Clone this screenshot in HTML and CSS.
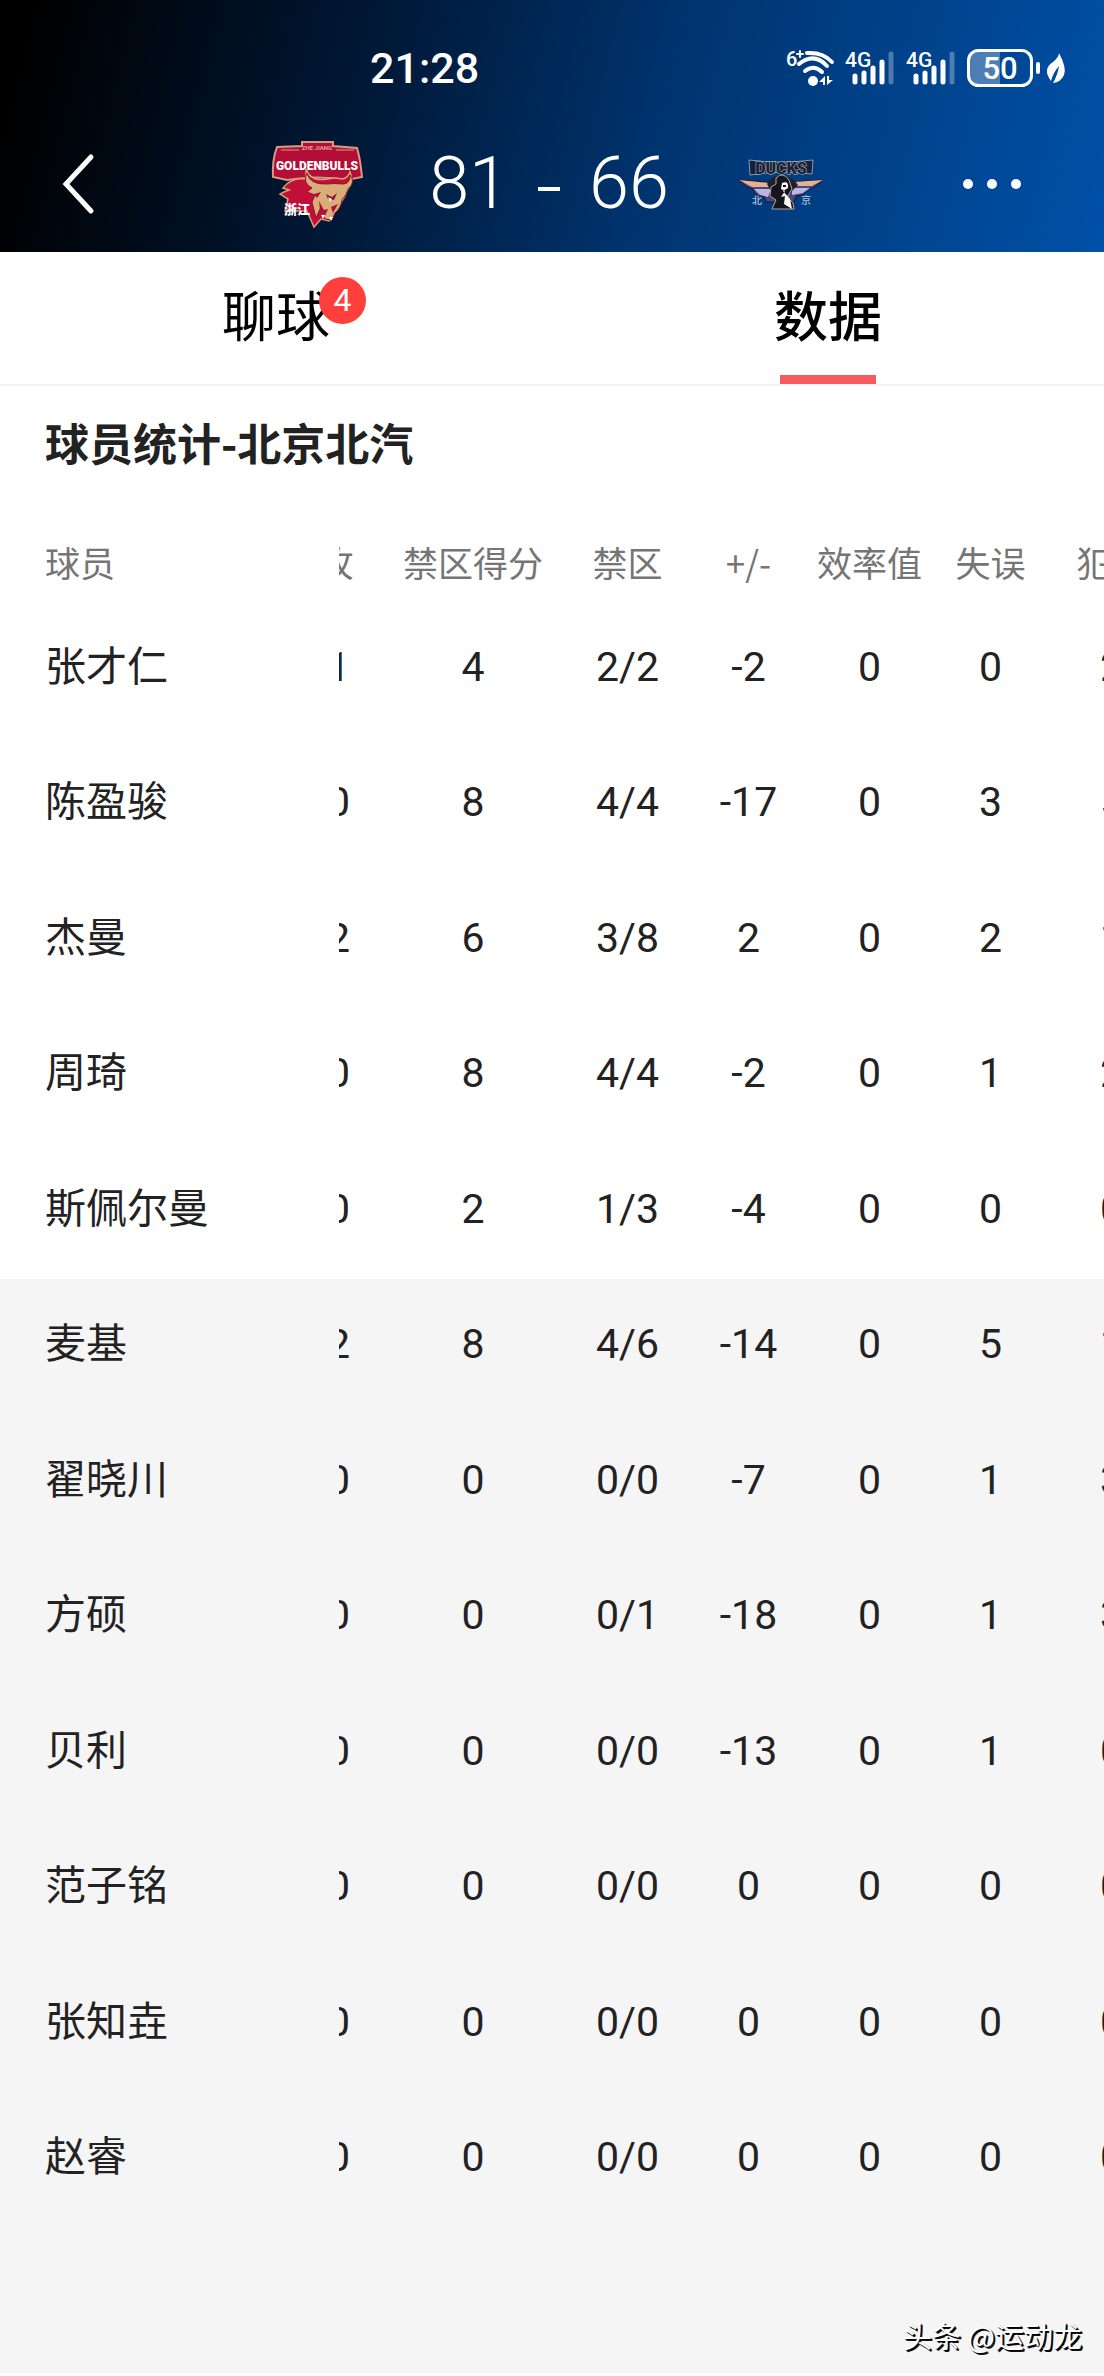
FILE: index.html
```html
<!DOCTYPE html>
<html lang="zh-CN">
<head>
<meta charset="utf-8">
<meta name="viewport" content="width=device-width, initial-scale=1">
<title>球员统计</title>
<link rel="stylesheet" href="styles.css">
</head>
<body>
<header class="top">
  <div class="status">
    <time class="clock">21:28</time>
    <div class="indicators">
      <svg class="wifi" viewBox="0 0 50 38" aria-hidden="true">
        <text class="tag" x="0" y="17" font-size="20">6</text>
        <path class="line" stroke-width="2" d="M14 2v6M11 5h6"/>
        <path class="line" stroke-width="4" d="M21 4q16-1 25 9M13 15q15-12 28 2M19 22q9-7 17 1"/>
        <circle cx="27" cy="32" r="5"/>
        <path d="M33 33l6-6v9h-2v-3zM41 27v9l6-5h-4v-4z"/>
      </svg>
      <svg class="signal" viewBox="0 0 52 38" aria-hidden="true">
        <text class="tag" x="0" y="18" font-size="21">4G</text>
        <path class="line" stroke-width="5" d="M10 27v6M19 24v9M28 19v14M37 13v20"/>
        <path class="line dim" stroke-width="5" d="M46 5v28"/>
      </svg>
      <svg class="signal" viewBox="0 0 52 38" aria-hidden="true">
        <text class="tag" x="0" y="18" font-size="21">4G</text>
        <path class="line" stroke-width="5" d="M10 27v6M19 24v9M28 19v14M37 13v20"/>
        <path class="line dim" stroke-width="5" d="M46 5v28"/>
      </svg>
      <svg class="battery" viewBox="0 0 74 38" aria-hidden="true">
        <path opacity=".3" d="M12 2h21v34H12q-10 0-10-10V12Q2 2 12 2z"/>
        <rect class="line" stroke-width="3" x="1.500" y="1.500" width="63" height="35" rx="10"/>
        <path class="line" stroke-width="4" d="M71 15v8"/>
        <text x="33" y="30" font-size="31" text-anchor="middle">50</text>
      </svg>
      <svg class="leaf" viewBox="0 0 20 32" aria-hidden="true">
        <path d="M13 1q8 15 5 22-3 7-11 8 5-9 6-17-6 7-8 15-9-12 2-19 6-5 6-9z"/>
      </svg>
    </div>
  </div>
  <nav class="match">
    <button class="icon-button" aria-label="返回"><svg width="32" height="60" viewBox="0 0 32 60"><path class="line" stroke-width="5" d="M29 3L4 30l25 27"/></svg></button>
    <div class="scoreline">
      <svg class="logo" viewBox="0 0 92 88" role="img" aria-label="浙江 Golden Bulls">
        <path fill="#b30f36" stroke="#d89a86" stroke-width="2" d="M31 2h31v4l24 2q3 9 5 29l-15 3Q46 35 16 40L2 37Q1 20 6 7l25-1z"/>
        <text class="logo-small" x="46" y="10" text-anchor="middle">ZHE JIANG</text>
        <path fill="none" stroke="#d89a86" d="M10 10h18M65 10h18"/>
        <path fill="#c20f38" stroke="#d9a07a" stroke-width="1.500" d="M35 39q-15-2-23 9l6 2q-6 2-9 4l8 5-3 12h22l7 16 7-8 8 2 4-7 11-16q3-8 7-14 1-8-1-12-2 6-8 7-9-2-14 0-18 3-22-10z"/>
        <path fill="#d9ad78" stroke="#8f1230" d="M36 33q-5 10 5 15l-5 4 8 3-3 7 4 16 4-9 5 10 7 1 3-7q6-5 7-13 5-6 6-11 8-7 2-14 0 9-7 9-10-1-16 0-17 1-20-11z"/>
        <path fill="#b20f35" d="M43 54l7-2-4 6zM60 67l7-3-5 9zM48 61l5 9 4-1-3 7-5-6z"/>
        <path fill="#8f1230" d="M55 54l6 3 5-4-3 7-6-1z"/>
        <path fill="#fff" d="M57 57l4 2-2 3zM50 75h4l-2 4zM58 77h4l-2 4z"/>
        <text class="logo-name" x="46" y="30" text-anchor="middle">GOLDENBULLS</text>
        <text class="logo-city" x="13" y="74">浙江</text>
      </svg>
      <h1 class="score"><span>81</span><i class="dash"></i><span>66</span></h1>
      <svg class="logo" viewBox="0 0 92 88" role="img" aria-label="北京 Ducks">
        <path fill="#162137" stroke="#8498b7" d="M14 20q31 4 64 0l-1 14q-31-4-62 1z"/>
        <text class="ducks-name" x="46" y="34" text-anchor="middle">DUCKS</text>
        <path fill="#4b4674" stroke="#17182c" d="M4 40l28 2 14-2 14 2 28-2-10 8-6 1-4 6-7 1-2 6H31l-2-6-8-1-3-6-6-2z"/>
        <path fill="#e6b191" d="M4 40l30 3 3 4H17zM88 40l-29 2-4 4h22z"/>
        <path fill="#b9b6e5" d="M19 49h17l-3 8-8-2zM57 48h18l-7 5-11 2z"/>
        <path fill="#20202d" d="M32 44q5-9 14-8 13 1 17 9l-8 8-17 2z"/>
        <path fill="#14151f" stroke="#b2a894" d="M41 38q7-7 13 2l3 9-5 8 6 6 1 6H37l4-9-6-4 1-9 5-3z"/>
        <path fill="#fff" d="M47 43q7-3 6 5l-5 3 7 8 2 10-8-5 1-8-4 1 4-6-4-2z"/>
        <path fill="#111" d="M48 45h3v2h-3z"/>
        <text class="ducks-city" x="17" y="64">北</text>
        <text class="ducks-city" x="66" y="64">京</text>
      </svg>
    </div>
    <button class="icon-button more" aria-label="更多"><svg width="60" height="12" viewBox="0 0 60 12"><circle cx="6" cy="6" r="5"/><circle cx="30" cy="6" r="5"/><circle cx="54" cy="6" r="5"/></svg></button>
  </nav>
</header>
<nav class="tabs">
  <a class="tab" href="#chat"><span class="tab-label">聊球<span class="badge">4</span></span></a>
  <a class="tab active" href="#data" aria-current="page"><span class="tab-label">数据</span></a>
</nav>
<main class="stats" id="data">
  <h2 class="title">球员统计-北京北汽</h2>
  <div class="columns">
    <table class="players">
      <thead><tr><th>球员</th></tr></thead>
      <tbody>
        <tr><td>张才仁</td></tr>
        <tr><td>陈盈骏</td></tr>
        <tr><td>杰曼</td></tr>
        <tr><td>周琦</td></tr>
        <tr><td>斯佩尔曼</td></tr>
        <tr><td>麦基</td></tr>
        <tr><td>翟晓川</td></tr>
        <tr><td>方硕</td></tr>
        <tr><td>贝利</td></tr>
        <tr><td>范子铭</td></tr>
        <tr><td>张知垚</td></tr>
        <tr><td>赵睿</td></tr>
      </tbody>
    </table>
    <div class="scroller">
      <table class="numbers">
        <colgroup><col class="col"><col class="col-wide"><col class="col"><col class="col"><col class="col"><col class="col"><col class="col"></colgroup>
        <thead><tr><th>快攻</th><th>禁区得分</th><th>禁区</th><th>+/-</th><th>效率值</th><th>失误</th><th>犯规</th></tr></thead>
        <tbody>
          <tr><td>1/1</td><td>4</td><td>2/2</td><td>-2</td><td>0</td><td>0</td><td>2</td></tr>
          <tr><td>0/0</td><td>8</td><td>4/4</td><td>-17</td><td>0</td><td>3</td><td>5</td></tr>
          <tr><td>2/2</td><td>6</td><td>3/8</td><td>2</td><td>0</td><td>2</td><td>1</td></tr>
          <tr><td>0/0</td><td>8</td><td>4/4</td><td>-2</td><td>0</td><td>1</td><td>2</td></tr>
          <tr><td>0/0</td><td>2</td><td>1/3</td><td>-4</td><td>0</td><td>0</td><td>0</td></tr>
          <tr><td>2/2</td><td>8</td><td>4/6</td><td>-14</td><td>0</td><td>5</td><td>1</td></tr>
          <tr><td>0/0</td><td>0</td><td>0/0</td><td>-7</td><td>0</td><td>1</td><td>3</td></tr>
          <tr><td>0/0</td><td>0</td><td>0/1</td><td>-18</td><td>0</td><td>1</td><td>3</td></tr>
          <tr><td>0/0</td><td>0</td><td>0/0</td><td>-13</td><td>0</td><td>1</td><td>0</td></tr>
          <tr><td>0/0</td><td>0</td><td>0/0</td><td>0</td><td>0</td><td>0</td><td>0</td></tr>
          <tr><td>0/0</td><td>0</td><td>0/0</td><td>0</td><td>0</td><td>0</td><td>0</td></tr>
          <tr><td>0/0</td><td>0</td><td>0/0</td><td>0</td><td>0</td><td>0</td><td>0</td></tr>
        </tbody>
      </table>
    </div>
  </div>
</main>
<footer class="credit">头条 @运动龙</footer>
</body>
</html>
```
FILE: styles.css
```css
* { box-sizing: border-box; }
body {
  margin: 0;
  min-height: 100vh;
  display: flex;
  flex-direction: column;
  background: #f5f5f5;
  border-bottom: 3px solid #fff;
  color: #222;
  font-family: Roboto, "Noto Sans CJK SC", sans-serif;
  overflow-x: hidden;
}
svg { display: block; fill: #fff; overflow: visible; }
.line { fill: none; stroke: #fff; stroke-linecap: round; }
.dim { opacity: .3; }
.tag { font-weight: 500; }

.top {
  height: 252px;
  color: #fff;
  background: linear-gradient(104deg, #000 3%, #001a3a 35%, #003470 60%, #00438c 80%, #0050a8 100%);
}
.status {
  height: 116px;
  padding: 20px 38px 0 370px;
  display: flex;
  align-items: center;
  justify-content: space-between;
}
.clock { font-size: 43px; font-weight: 500; }
.indicators { display: flex; align-items: center; gap: 9px; font-weight: 500; }
.wifi { width: 50px; height: 38px; }
.signal { width: 52px; height: 38px; }
.battery { width: 74px; height: 38px; }
.leaf { width: 20px; height: 32px; margin-left: -4px; }

.match {
  height: 136px;
  padding: 0 68px 0 62px;
  display: grid;
  grid-template-columns: 1fr auto 1fr;
  align-items: center;
}
.icon-button { justify-self: start; padding: 0; border: 0; background: none; }
.more { justify-self: end; padding-right: 14px; }
.scoreline { display: flex; align-items: center; gap: 66px; }
.logo { width: 92px; height: 88px; }
.score {
  margin: 0;
  display: flex;
  align-items: center;
  gap: 29px;
  font-size: 72px;
  font-weight: 300;
  line-height: 80px;
}
.dash { width: 22px; height: 4px; margin-top: 10px; background: #fff; }
.logo-small { font: 700 6px Roboto, sans-serif; fill: #e3a094; }
.logo-name { font: 900 12px Roboto, sans-serif; }
.logo-city { font: 900 13px "Noto Sans CJK SC", sans-serif; }
.ducks-name { font: 900 16px Roboto, sans-serif; fill: #1a2233; stroke: #b7c2d4; stroke-width: 1px; paint-order: stroke; }
.ducks-city { font: 500 10px "Noto Sans CJK SC", sans-serif; fill: #a9c0da; }

.tabs {
  height: 134px;
  display: grid;
  grid-template-columns: 1fr 1fr;
  background: #fff;
  border-bottom: 2px solid #f3f3f3;
}
.tab {
  display: flex;
  flex-direction: column;
  align-items: center;
  justify-content: space-between;
  padding-top: 27px;
  color: #000;
  font-size: 54px;
  line-height: 80px;
  text-decoration: none;
}
.tab-label { position: relative; }
.active { font-weight: 500; }
.active::after { content: ""; width: 96px; height: 9px; background: #f55a5f; }
.badge {
  position: absolute;
  left: 97px;
  top: -2px;
  width: 47px;
  height: 47px;
  border-radius: 50%;
  background: #ff3f3c;
  color: #fff;
  font-size: 32px;
  line-height: 47px;
  text-align: center;
}

.stats { background: linear-gradient(#fff 893px, #f5f5f5 893px); }
.title {
  margin: 0;
  padding: 24px 45px 0;
  font-family: "Noto Sans CJK SC", sans-serif;
  font-size: 44px;
  font-weight: 700;
  line-height: 64px;
}
.columns { display: flex; }
.players { width: 339px; flex: none; }
.scroller { flex: 1; min-width: 0; overflow: hidden; display: flex; }
.numbers { width: 914px; flex: none; table-layout: fixed; margin-left: -81px; }
.col { width: 121px; }
.col-wide { width: 188px; }
table { border-collapse: collapse; }
th, td { padding: 0; white-space: nowrap; text-align: center; }
.players th, .players td { padding-left: 45px; text-align: left; }
th {
  height: 129px;
  padding-top: 64px;
  color: #757575;
  font-family: "Noto Sans CJK SC", sans-serif;
  font-size: 35px;
  font-weight: 400;
  line-height: 48px;
  vertical-align: top;
}
td { height: 135px; padding-top: 34px; font-size: 41px; line-height: 60px; vertical-align: top; }
tr:nth-child(even) td { height: 136px; }

.credit {
  margin-top: auto;
  padding: 0 22px 18px;
  color: #fff;
  font-family: "Noto Sans CJK SC", sans-serif;
  font-size: 29px;
  line-height: 40px;
  text-align: right;
  text-shadow: 1px 1px 1px #000, 2px 2px 0 #111;
}
```
